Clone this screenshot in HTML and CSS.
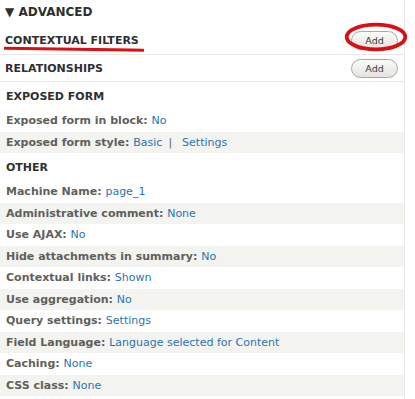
FILE: index.html
```html
<!DOCTYPE html>
<html lang="en">

<head>
  <meta charset="UTF-8">
  <meta name="viewport" content="width=device-width, initial-scale=1.0">
  <title>Views - Advanced</title>
  <link rel="stylesheet" href="styles.css">
</head>

<body>
  <div class="column">
    <!-- 고급 설정 -->
    <div class="advanced">&#9660; ADVANCED</div>

    <div class="bucket bucket-line contextual">
      <span class="bucket-title">CONTEXTUAL FILTERS</span>
      <button class="add-btn">Add</button>
      <!-- 주석 표시 (빨간 밑줄 / 동그라미) -->
      <svg class="mark-underline" width="140" height="6" viewBox="0 0 140 6">
        <path d="M1 2.2 C40 2.6 90 3.4 139 4.2" stroke="#d90f14" stroke-width="3" fill="none" stroke-linecap="round" />
      </svg>
      <svg class="mark-circle" width="66" height="32" viewBox="0 0 66 32">
        <ellipse cx="33" cy="16" rx="29.3" ry="12.3" stroke="#d90f14" stroke-width="3.8" fill="none" />
      </svg>
    </div>

    <div class="bucket bucket-line relationships">
      <span class="bucket-title">RELATIONSHIPS</span>
      <button class="add-btn">Add</button>
    </div>

    <div class="group-title">EXPOSED FORM</div>
    <div class="row">Exposed form in block: <a href="#">No</a></div>
    <div class="row odd">Exposed form style: <a href="#">Basic</a><span class="pipe">|</span><a href="#">Settings</a></div>

    <div class="group-title">OTHER</div>
    <div class="row">Machine Name: <a href="#">page_1</a></div>
    <div class="row odd">Administrative comment: <a href="#">None</a></div>
    <div class="row">Use AJAX: <a href="#">No</a></div>
    <div class="row odd">Hide attachments in summary: <a href="#">No</a></div>
    <div class="row">Contextual links: <a href="#">Shown</a></div>
    <div class="row odd">Use aggregation: <a href="#">No</a></div>
    <div class="row">Query settings: <a href="#">Settings</a></div>
    <div class="row odd">Field Language: <a href="#">Language selected for Content</a></div>
    <div class="row">Caching: <a href="#">None</a></div>
    <div class="row odd">CSS class: <a href="#">None</a></div>
  </div>
</body>

</html>
```

FILE: styles.css
```css
* {
  margin: 0;
  padding: 0;
  box-sizing: border-box;
}

body {
  font-family: "DejaVu Sans", "Liberation Sans", sans-serif;
  background: #fff;
  color: #333;
  overflow: hidden;
}

.column {
  width: 405px;
  min-height: 399px;
  border-right: 1px solid #e9e9e6;
}

.advanced {
  height: 26px;
  padding: 4px 0 0 5px;
  font-size: 12px;
  font-weight: bold;
  color: #2f2f2f;
  line-height: 16px;
}

.bucket {
  position: relative;
  display: flex;
  justify-content: space-between;
  align-items: center;
  height: 26px;
  padding: 0 6px 0 5px;
}

.bucket.contextual {
  height: 29px;
  padding-top: 1px;
}

.bucket.relationships {
  height: 27px;
  padding-top: 1px;
}

.bucket-line {
  border-bottom: 1px solid #e8e8e4;
}

.bucket-title,
.group-title {
  font-size: 11px;
  font-weight: bold;
  color: #2f2f2f;
}

.add-btn {
  width: 47px;
  height: 19px;
  border: 1px solid #a9a9a6;
  border-radius: 10px;
  background: linear-gradient(#fbfbfa, #e3e3df);
  font-family: "DejaVu Sans", sans-serif;
  font-size: 9.5px;
  color: #3c3c3c;
  line-height: 17px;
}

.mark-underline {
  position: absolute;
  left: 4px;
  top: 20px;
}

.mark-circle {
  position: absolute;
  right: -5px;
  top: -5px;
}

.group-title {
  height: 28px;
  line-height: 30px;
  padding-left: 6px;
}

.row {
  height: 21.5px;
  line-height: 21px;
  padding-left: 6px;
  font-size: 11px;
  font-weight: bold;
  color: #5f5f5c;
  white-space: nowrap;
}

.row.odd {
  background: #f3f3ef;
}

.row a {
  font-weight: normal;
  color: #2a73b0;
  text-decoration: none;
}

.pipe {
  font-weight: normal;
  color: #666;
  margin: 0 10px 0 6px;
}
```
